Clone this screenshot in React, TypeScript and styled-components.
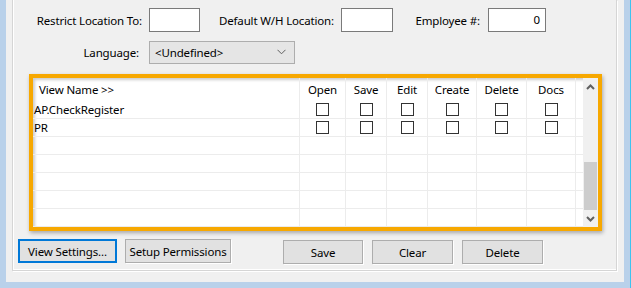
import React from 'react';
import styled, { createGlobalStyle } from 'styled-components';

const GlobalStyle = createGlobalStyle`
  html, body {
    margin: 0;
    padding: 0;
    background: #b9d1ea;
  }
  body {
    font-family: 'Noto Sans', 'Liberation Sans', sans-serif;
    font-size: 11.5px;
    letter-spacing: -0.15px;
    color: #000;
  }
`;

const columns = ['Open', 'Save', 'Edit', 'Create', 'Delete', 'Docs'];
const views = ['AP.CheckRegister', 'PR', '', '', '', '', ''];

const App = () => {
  return (
    <>
      <GlobalStyle />
      <Frame>
        <Client>
          <Panel>
            <FormRow>
              <Label $width={129}>Restrict Location To:</Label>
              <TextBox $width={51} />
              <Label $width={134}>Default W/H Location:</Label>
              <TextBox $width={52} />
              <Label $width={87}>Employee #:</Label>
              <TextBox $width={58} $gap={8}>0</TextBox>
            </FormRow>
            <FormRow>
              <Label $width={126}>Language:</Label>
              <Select>
                <span>&lt;Undefined&gt;</span>
                <svg width="9" height="6" viewBox="0 0 9 6">
                  <path d="M0.5 0.8 L4.5 4.8 L8.5 0.8" fill="none" stroke="#606060" strokeWidth="1" />
                </svg>
              </Select>
            </FormRow>

            <GridFrame>
              <GridBody>
                <HeaderCell $first>View Name &gt;&gt;</HeaderCell>
                {columns.map((c) => (
                  <HeaderCell key={c}>{c}</HeaderCell>
                ))}
                <HeaderCell $filler />
                {views.map((v, i) => (
                  <React.Fragment key={i}>
                    <NameCell>{v}</NameCell>
                    {columns.map((c) => (
                      <Cell key={c}>{v && <CheckBox />}</Cell>
                    ))}
                    <Cell />
                  </React.Fragment>
                ))}
              </GridBody>
              <ScrollBar>
                <ScrollArrow>
                  <svg width="9" height="6" viewBox="0 0 9 6">
                    <path d="M1 5 L4.5 1.5 L8 5" fill="none" stroke="#606060" strokeWidth="2" />
                  </svg>
                </ScrollArrow>
                <ScrollTrack>
                  <Thumb />
                </ScrollTrack>
                <ScrollArrow>
                  <svg width="9" height="6" viewBox="0 0 9 6">
                    <path d="M1 1 L4.5 4.5 L8 1" fill="none" stroke="#606060" strokeWidth="2" />
                  </svg>
                </ScrollArrow>
              </ScrollBar>
            </GridFrame>

            <ButtonBar>
              <LeftButtons>
                <Button $width={99} $focused>View Settings...</Button>
                <Button $width={106}>Setup Permissions</Button>
              </LeftButtons>
              <RightButtons>
                <Button $width={80}>Save</Button>
                <Button $width={81}>Clear</Button>
                <Button $width={81}>Delete</Button>
              </RightButtons>
            </ButtonBar>
          </Panel>
        </Client>
      </Frame>
    </>
  );
};

const Frame = styled.div`
  width: 631px;
  height: 288px;
  box-sizing: border-box;
  padding: 0 6px 6px 6px;
  border-right: 1px solid #3cc3f0;
  background: #b9d1ea;
  display: flex;
`;

const Client = styled.div`
  flex: 1;
  background: #f0f0f0;
  padding: 0 7px 11px 6px;
  display: flex;
`;

const Panel = styled.div`
  flex: 1;
  border: 1px solid #d5d5d5;
  border-top: none;
  box-shadow: inset 1px -1px 0 #fff, 1px 1px 0 #fff;
  padding-top: 8px;
  display: flex;
  flex-direction: column;
`;

const FormRow = styled.div`
  display: flex;
  align-items: center;
  height: 24px;
  margin-bottom: 8px;
`;

const Label = styled.div<{ $width: number }>`
  width: ${(p) => p.$width}px;
  text-align: right;
  white-space: nowrap;
`;

const TextBox = styled.div<{ $width: number; $gap?: number }>`
  width: ${(p) => p.$width}px;
  height: 24px;
  box-sizing: border-box;
  margin-left: ${(p) => p.$gap ?? 7}px;
  border: 1px solid #7a7a7a;
  background: #fff;
  text-align: right;
  padding-right: 5px;
  line-height: 22px;
`;

const Select = styled.div`
  margin-left: 10px;
  width: 146px;
  height: 23px;
  box-sizing: border-box;
  border: 1px solid #adadad;
  background: #e5e5e5;
  display: flex;
  align-items: center;
  justify-content: space-between;
  padding: 0 8px 0 5px;
`;

const GridFrame = styled.div`
  margin: 2px 0 0 16px;
  width: 573px;
  height: 157px;
  box-sizing: border-box;
  border: 4px solid #f7a800;
  box-shadow: 1px 2px 4px rgba(0, 0, 0, 0.3), inset 2px 2px 3px rgba(0, 0, 0, 0.2);
  background: #fff;
  display: flex;
`;

const GridBody = styled.div`
  flex: 1;
  display: grid;
  grid-template-columns: 267px 46px 41px 41px 49px 50px 49px 1fr;
  grid-template-rows: 23px repeat(7, 18px);
`;

const HeaderCell = styled.div<{ $first?: boolean; $filler?: boolean }>`
  border-right: ${(p) => (p.$filler ? 'none' : '1px solid #ececec')};
  display: flex;
  align-items: center;
  justify-content: ${(p) => (p.$first ? 'flex-start' : 'center')};
  padding-left: ${(p) => (p.$first ? '6px' : '0')};
  white-space: nowrap;
`;

const NameCell = styled.div`
  border-right: 1px solid #ececec;
  border-bottom: 1px solid #ececec;
  display: flex;
  align-items: center;
  padding-left: 1px;
  white-space: nowrap;
`;

const Cell = styled.div`
  border-right: 1px solid #ececec;
  border-bottom: 1px solid #ececec;
  display: flex;
  align-items: center;
  justify-content: center;
  &:nth-child(8n) {
    border-right: none;
  }
`;

const CheckBox = styled.div`
  width: 13px;
  height: 13px;
  box-sizing: border-box;
  border: 1px solid #333;
  background: #fff;
`;

const ScrollBar = styled.div`
  width: 15px;
  background: #f0f0f0;
  display: flex;
  flex-direction: column;
`;

const ScrollArrow = styled.div`
  height: 17px;
  display: flex;
  align-items: center;
  justify-content: center;
`;

const ScrollTrack = styled.div`
  flex: 1;
  display: flex;
  flex-direction: column;
  justify-content: flex-end;
  padding: 0 1px;
`;

const Thumb = styled.div`
  height: 48px;
  background: #cdcdcd;
`;

const ButtonBar = styled.div`
  display: flex;
  margin-top: 8px;
  padding-left: 5px;
`;

const LeftButtons = styled.div`
  display: flex;
  gap: 8px;
`;

const RightButtons = styled.div`
  display: flex;
  gap: 9px;
  margin-left: 52px;
  padding-top: 1px;
`;

const Button = styled.div<{ $width: number; $focused?: boolean }>`
  width: ${(p) => p.$width}px;
  height: 24px;
  box-sizing: border-box;
  background: #e1e1e1;
  border: ${(p) => (p.$focused ? '2px solid #0078d7' : '1px solid #adadad')};
  box-shadow: ${(p) => (p.$focused ? 'none' : '1px 1px 0 #fff')};
  display: flex;
  align-items: center;
  justify-content: center;
  white-space: nowrap;
`;

export default App;
